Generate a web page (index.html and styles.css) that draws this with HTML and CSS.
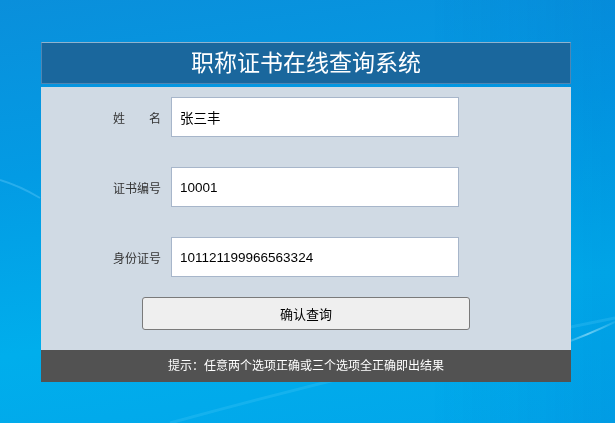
FILE: index.html
```html
<!DOCTYPE html>
<html lang="zh-CN">
<head>
    <meta charset="UTF-8">
    <meta name="viewport" content="width=device-width, initial-scale=1.0">
    <title>职称证书在线查询系统</title>
    <link rel="stylesheet" href="styles.css">
</head>
<body>

    <!-- Desktop wallpaper streaks -->
    <svg class="wallpaper" viewBox="0 0 615 423" preserveAspectRatio="none">
        <defs>
            <linearGradient id="streak" x1="0" y1="0" x2="1" y2="0">
                <stop offset="0" stop-color="#bff0ff" stop-opacity="0"/>
                <stop offset="0.5" stop-color="#bff0ff" stop-opacity="0.55"/>
                <stop offset="1" stop-color="#bff0ff" stop-opacity="0.1"/>
            </linearGradient>
        </defs>
        <path d="M0 180 Q20 186 40 198" stroke="#7fd8ff" stroke-opacity="0.3" stroke-width="2" fill="none"/>
        <path d="M560 345 Q590 334 615 322" stroke="url(#streak)" stroke-width="2" fill="none"/>
        <path d="M170 423 Q380 365 615 318" stroke="#6fd6ff" stroke-opacity="0.18" stroke-width="3" fill="none"/>
    </svg>

    <!-- Query panel -->
    <div class="panel">
        <div class="panel-header">职称证书在线查询系统</div>

        <form class="panel-body" onsubmit="return false;">
            <div class="form-row">
                <label class="form-label" for="name">姓　　名</label>
                <input class="form-input" id="name" type="text" value="张三丰">
            </div>
            <div class="form-row">
                <label class="form-label" for="cert">证书编号</label>
                <input class="form-input" id="cert" type="text" value="10001">
            </div>
            <div class="form-row">
                <label class="form-label" for="idcard">身份证号</label>
                <input class="form-input" id="idcard" type="text" value="101121199966563324">
            </div>
            <button class="query-button" type="submit">确认查询</button>
        </form>

        <div class="panel-footer">提示：任意两个选项正确或三个选项全正确即出结果</div>
    </div>

</body>
</html>
```

FILE: styles.css
```css
html, body {height: 100%;}
body {margin: 0;padding: 0;overflow: hidden;font-family: "Liberation Sans", "Noto Sans CJK SC", sans-serif;background: linear-gradient(172deg, #0a8fdb 0%, #039be4 35%, #00aeec 70%, #02a6ea 100%);}
.wallpaper {position: fixed;left: 0;top: 0;width: 100%;height: 100%;z-index: -1;}
.wallpaper {background: linear-gradient(90deg, rgba(0,0,0,0) 0%, rgba(0,0,0,0) 70%, rgba(0,40,160,0.08) 100%);}

.panel {width: 530px;margin: 42px 0 0 41px;}
.panel-header {height: 40px;line-height: 40px;margin-bottom: 3px;background-color: #1a679d;border: 1px solid #4f86b3;border-top-color: #8fb3cf;color: #fff;font-size: 23px;text-align: center;}
.panel-body {display: flex;flex-direction: column;gap: 30px;padding: 10px 0 20px;margin: 0;background-color: #d0dae4;}
.form-row {display: flex;align-items: center;gap: 10px;}
.form-label {width: 120px;text-align: right;font-size: 12px;color: #333;}
.form-input {width: 288px;height: 40px;box-sizing: border-box;padding: 0 8px;border: 1px solid #a7b6ca;background: #fff;font-family: inherit;font-size: 13.5px;color: #000;outline: none;}
.query-button {align-self: center;width: 328px;height: 33px;margin-top: -10px;border: 1px solid #7a7a7a;border-radius: 3px;background-color: #efefef;font-family: inherit;font-size: 13px;color: #000;cursor: pointer;}
.panel-footer {height: 32px;line-height: 32px;background-color: #525252;color: #fff;font-size: 12px;text-align: center;}
```
